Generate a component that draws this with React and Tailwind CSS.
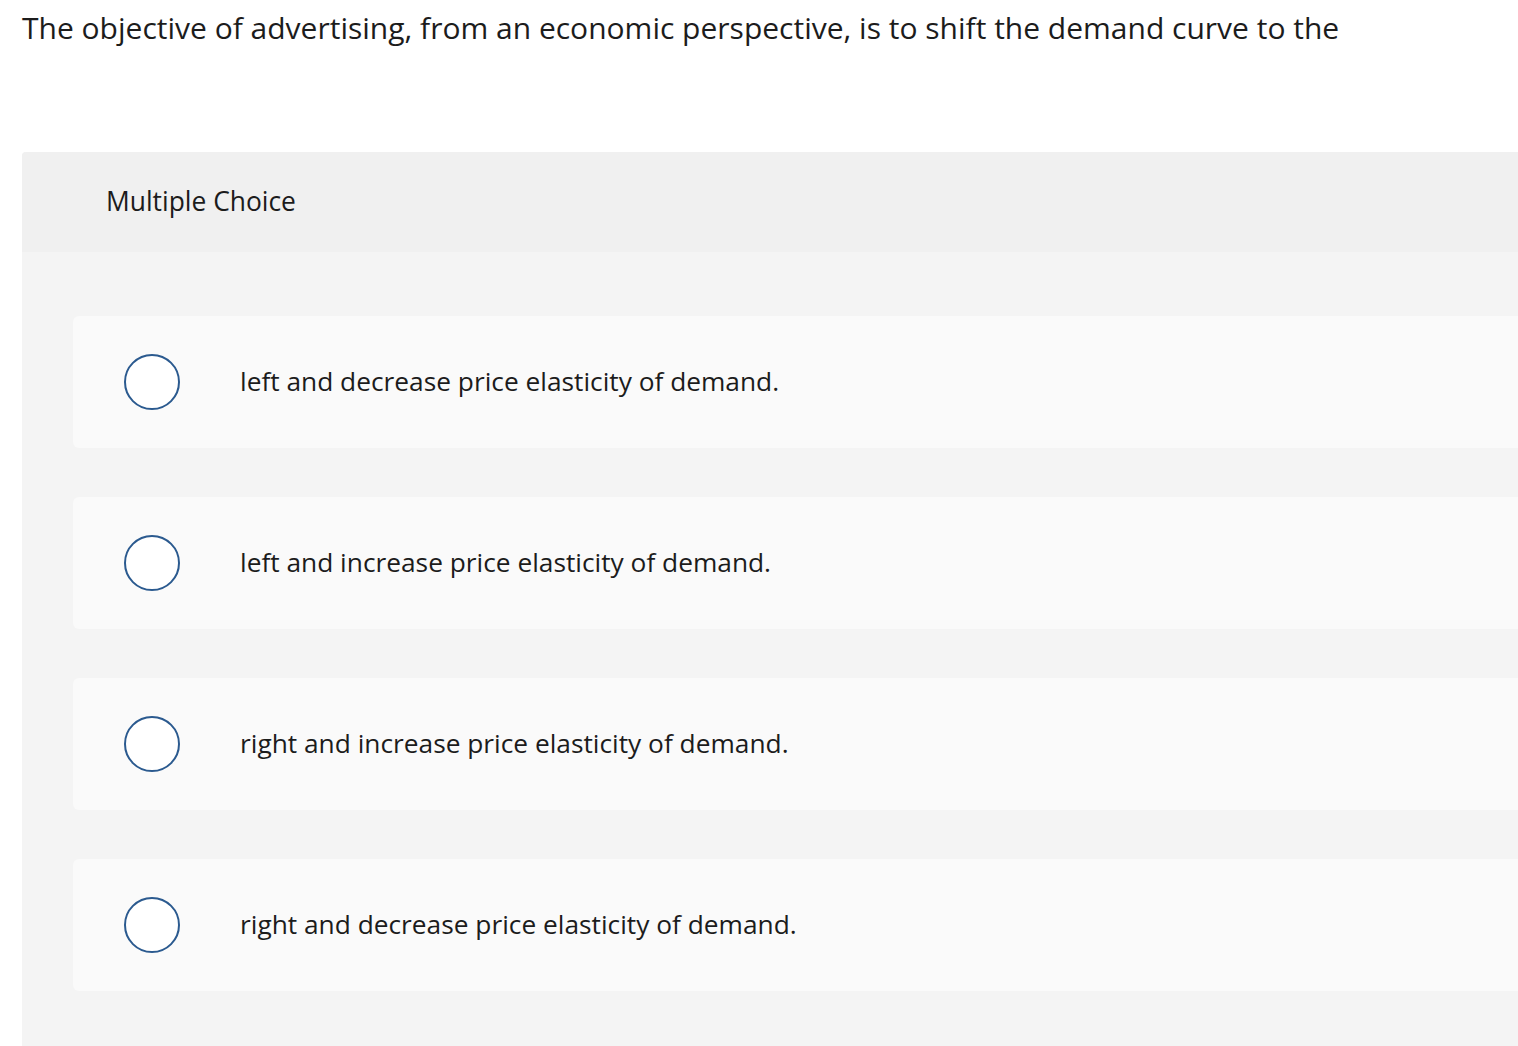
import { useState } from "react";

const options = [
  "left and decrease price elasticity of demand.",
  "left and increase price elasticity of demand.",
  "right and increase price elasticity of demand.",
  "right and decrease price elasticity of demand.",
];

export default function App() {
  const [picked, setPicked] = useState(null);

  return (
    <div className="min-h-screen overflow-hidden bg-white font-['Open_Sans',sans-serif] text-[#1c1c1c]">
      <p className="pl-[22px] pt-[8px] text-[30px] leading-[40px]">
        The objective of advertising, from an economic perspective, is to shift the demand curve to the
      </p>

      <section className="ml-[22px] mt-[104px] rounded-tl-[4px] bg-[#f4f4f4]">
        <header className="flex h-[100px] items-center rounded-tl-[4px] bg-[#f0f0f0] pl-[84px]">
          <h2 className="text-[26.4px]">Multiple Choice</h2>
        </header>

        <div className="flex flex-col gap-[49px] pb-[60px] pl-[51px] pt-[64px]">
          {options.map((text, i) => (
            <OptionRow key={i} text={text} checked={picked === i} onClick={() => setPicked(i)} />
          ))}
        </div>
      </section>
    </div>
  );
}

function OptionRow({ text, checked, onClick }) {
  return (
    <button
      onClick={onClick}
      className="flex h-[132px] w-full items-center rounded-l-[6px] bg-[#fafafa] text-left"
    >
      <span className="ml-[51px] flex h-[56px] w-[56px] shrink-0 items-center justify-center rounded-full border-2 border-[#2b5a8f] bg-white">
        {checked ? <span className="h-[28px] w-[28px] rounded-full bg-[#2b5a8f]" /> : null}
      </span>
      <span className="ml-[60px] text-[26.3px]">{text}</span>
    </button>
  );
}
